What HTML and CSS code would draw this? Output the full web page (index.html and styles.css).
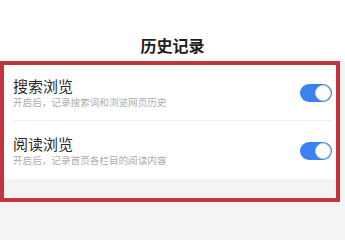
FILE: index.html
```html
<!DOCTYPE html>
<html lang="zh-CN">
<head>
<meta charset="utf-8">
<link rel="stylesheet" href="styles.css">
</head>
<body>
<header class="header">
  <h1 class="title">历史记录</h1>
</header>
<section class="box">
  <div class="list">
    <div class="row row-first">
      <div class="text">
        <div class="name">搜索浏览</div>
        <div class="desc">开启后，记录搜索词和浏览网页历史</div>
      </div>
      <span class="toggle"><span class="knob"></span></span>
    </div>
    <div class="row row-second">
      <div class="text">
        <div class="name">阅读浏览</div>
        <div class="desc">开启后，记录首页各栏目的阅读内容</div>
      </div>
      <span class="toggle"><span class="knob"></span></span>
    </div>
  </div>
  <div class="gap"></div>
</section>
</body>
</html>
```
FILE: styles.css
```css
* { box-sizing: border-box; }
html, body {
  margin: 0;
  padding: 0;
}
body {
  background: #f4f4f4;
  font-family: "Noto Sans CJK SC", "Noto Sans", sans-serif;
  width: 345px;
  height: 216px;
  overflow: hidden;
}
.header {
  background: #ffffff;
  height: 61px;
  padding-top: 35px;
}
.title {
  margin: 0;
  font-size: 16px;
  line-height: 21px;
  font-weight: 700;
  color: #1e1e1e;
  text-align: center;
}
.box {
  width: 340px;
  border: 4px solid #c2353e;
  background: #f4f4f4;
}
.list {
  background: #ffffff;
}
.row {
  display: flex;
  align-items: center;
  justify-content: space-between;
  margin: 0 3px 0 9px;
}
.row-first {
  padding: 11px 0 11px 0;
  border-bottom: 1px solid #eeeeee;
}
.row-second {
  padding: 13px 0 12px 0;
}
.text {
  display: flex;
  flex-direction: column;
}
.name {
  font-size: 15px;
  line-height: 19px;
  color: #2a2a2a;
}
.desc {
  font-size: 9.6px;
  line-height: 14px;
  color: #acacac;
}
.toggle {
  width: 32px;
  height: 18px;
  border-radius: 9px;
  background: #3b82ef;
  display: flex;
  align-items: center;
  justify-content: flex-end;
  padding-right: 1px;
  margin-right: 1px;
}
.knob {
  width: 16px;
  height: 16px;
  border-radius: 50%;
  background: #ffffff;
  border: 1px solid #d8d8d8;
}
.gap {
  height: 19px;
}
```
